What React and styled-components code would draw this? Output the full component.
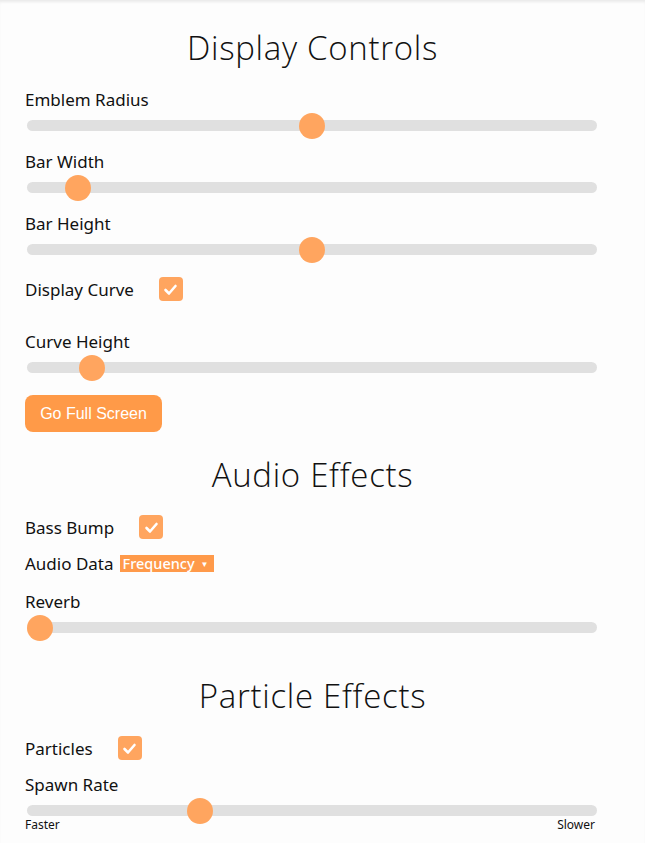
import React from 'react'
import styled, { createGlobalStyle } from 'styled-components';

const GlobalStyle = createGlobalStyle`
    body {
        margin: 0;
        background: #fdfdfd;
        font-family: "Noto Sans", "Open Sans", sans-serif;
        color: #111;
    }
`;

const sliders = {
    emblem: 0.5,
    barWidth: 0.07,
    barHeight: 0.5,
    curve: 0.0956,
    reverb: 0,
    spawn: 0.294,
};

const Check = () => (
    <CheckBox>
        <svg width="15" height="15" viewBox="0 0 15 15">
            <polyline points="2.5,8 6,11.5 12.5,4" fill="none" stroke="#fff" strokeWidth="2.6" strokeLinecap="round" strokeLinejoin="round" />
        </svg>
    </CheckBox>
);

const Slider = ({ value }) => (
    <Range type="range" min="0" max="1000" defaultValue={Math.round(value * 1000)} />
);

const App = () => {
    return (
        <Page>
            <GlobalStyle />
            <Panel>
                <Heading>Display Controls</Heading>

                <Label $top={22}>Emblem Radius</Label>
                <Slider value={sliders.emblem} />

                <Label $top={21}>Bar Width</Label>
                <Slider value={sliders.barWidth} />

                <Label $top={21}>Bar Height</Label>
                <Slider value={sliders.barHeight} />

                <CheckRow $top={22}>
                    <span>Display Curve</span>
                    <Check />
                </CheckRow>

                <Label $top={31}>Curve Height</Label>
                <Slider value={sliders.curve} />

                <FullButton>Go Full Screen</FullButton>

                <Heading $top={23}>Audio Effects</Heading>

                <CheckRow $top={20}>
                    <span>Bass Bump</span>
                    <Check />
                </CheckRow>

                <SelectRow>
                    <span>Audio Data</span>
                    <SelectBox>
                        <Select defaultValue="frequency">
                            <option value="frequency">Frequency</option>
                            <option value="waveform">Waveform</option>
                        </Select>
                        <Arrow>▼</Arrow>
                    </SelectBox>
                </SelectRow>

                <Label $top={19}>Reverb</Label>
                <Slider value={sliders.reverb} />

                <Heading $top={43}>Particle Effects</Heading>

                <CheckRow $top={20}>
                    <span>Particles</span>
                    <Check />
                </CheckRow>

                <Label $top={15}>Spawn Rate</Label>
                <Slider value={sliders.spawn} />
                <Scale>
                    <span>Faster</span>
                    <span>Slower</span>
                </Scale>
            </Panel>
        </Page>
    )
}

const Page = styled.div`
    min-height: 843px;
    box-shadow: inset 0 3px 3px -1px rgba(0, 0, 0, .08);
    padding-top: 28px;
    box-sizing: border-box;
`;

const Panel = styled.div`
    width: 575px;
    margin-left: 25px;
    display: flex;
    flex-direction: column;
`;

const Heading = styled.h2`
    margin: ${props => props.$top || 0}px 0 0;
    font-family: "Open Sans", sans-serif;
    font-weight: 300;
    font-size: 33px;
    line-height: 40px;
    text-align: center;
    letter-spacing: 0.7px;
    color: #111;
`;

const Label = styled.div`
    margin-top: ${props => props.$top || 0}px;
    font-size: 17px;
    line-height: 20px;
`;

const Range = styled.input`
    -webkit-appearance: none;
    appearance: none;
    width: 570px;
    height: 11px;
    margin: 10px 0 0 2px;
    border-radius: 6px;
    background: #e0e0e0;
    outline: none;

    &::-webkit-slider-thumb {
        -webkit-appearance: none;
        appearance: none;
        width: 26px;
        height: 26px;
        border-radius: 50%;
        background: #ffa55f;
        border: none;
        cursor: pointer;
    }
`;

const CheckRow = styled.div`
    margin-top: ${props => props.$top || 0}px;
    display: flex;
    align-items: center;
    gap: 25px;
    height: 24px;
    font-size: 17px;
`;

const CheckBox = styled.span`
    width: 24px;
    height: 24px;
    border-radius: 4px;
    background: #ffa55f;
    display: flex;
    align-items: center;
    justify-content: center;
`;

const FullButton = styled.button`
    align-self: flex-start;
    margin-top: 22px;
    width: 137px;
    height: 37px;
    border: none;
    border-radius: 8px;
    background: #ff9a48;
    color: #fff;
    font-family: "Liberation Sans", Arial, sans-serif;
    font-size: 16px;
    cursor: pointer;
`;

const SelectRow = styled.div`
    margin-top: 14px;
    display: flex;
    align-items: center;
    gap: 6px;
    height: 20px;
    font-size: 17px;
`;

const SelectBox = styled.span`
    display: flex;
    align-items: center;
    height: 17px;
    padding: 0 6px 0 3px;
    background: #ff9a4a;
    color: #fff;
`;

const Select = styled.select`
    -webkit-appearance: none;
    appearance: none;
    border: none;
    background: transparent;
    color: #fff;
    font-family: "Noto Sans", sans-serif;
    font-size: 14.5px;
    font-weight: 500;
    padding: 0;
    outline: none;
`;

const Arrow = styled.span`
    font-size: 8px;
    margin-left: 5px;
`;

const Scale = styled.div`
    display: flex;
    justify-content: space-between;
    width: 570px;
    margin-top: 1px;
    font-size: 12px;
    line-height: 16px;
`;

export default App
